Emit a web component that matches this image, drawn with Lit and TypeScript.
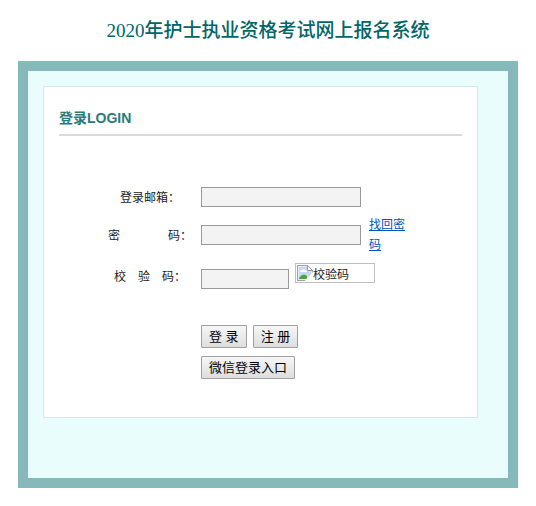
import { LitElement, html, css } from "lit";
import { customElement } from "lit/decorators.js";

@customElement("app-root")
export class AppRoot extends LitElement {
  static styles = css`
    :host {
      display: block;
      padding: 17px 18px 18px;
      background: #fff;
      color: #222;
      font: 12px/20px "Liberation Sans", "Noto Sans CJK SC", sans-serif;
    }
    .title {
      margin: 0 0 16px;
      text-align: center;
      color: #006666;
      font: 500 19px/28px "Liberation Serif", "Noto Sans CJK SC", serif;
    }
    .frame {
      border: 10px solid #86baba;
      background: #e9fdfd;
      padding: 15px 30px 60px 15px;
    }
    .card {
      border: 1px solid #d5e8e2;
      background: #fff;
      padding: 21px 15px 38px;
    }
    .heading {
      margin: 0;
      padding-bottom: 6px;
      border-bottom: 2px solid #dadada;
      color: #2a7a7b;
      font-size: 14px;
      line-height: 20px;
      font-weight: bold;
    }
    .form {
      display: flex;
      flex-direction: column;
      gap: 8px;
      padding: 51px 40px 0;
    }
    .row {
      display: grid;
      grid-template-columns: 102px 1fr;
      align-items: center;
    }
    .label {
      padding-top: 2px;
      line-height: 18px;
      text-align: center;
      white-space: pre;
    }
    .field {
      display: flex;
      align-items: center;
      gap: 8px;
    }
    .field.check {
      gap: 6px;
      align-items: flex-end;
      height: 26px;
    }
    .input {
      box-sizing: border-box;
      width: 160px;
      height: 20px;
      padding: 1px 2px;
      border: 1px solid #999;
      border-radius: 0;
      background: #f3f3f3;
      font: inherit;
    }
    .short {
      width: 88px;
    }
    .link {
      width: 40px;
      color: #0055bf;
      text-decoration: underline;
    }
    .captcha {
      box-sizing: border-box;
      display: flex;
      align-self: flex-start;
      align-items: flex-start;
      width: 80px;
      height: 20px;
      padding: 1px 1px 0;
      border: 1px solid #c0c0c0;
    }
    .broken {
      flex: none;
    }
    .actions {
      display: flex;
      flex-wrap: wrap;
      gap: 8px 6px;
      margin: 28px 0 0 102px;
      max-width: 160px;
    }
    .button {
      box-sizing: border-box;
      height: 23px;
      padding: 0 7px;
      border: 1px solid #a0a0a0;
      border-radius: 1px;
      background: linear-gradient(#f6f6f6, #dedede);
      color: #000;
      font: 13px/20px "Liberation Sans", "Noto Sans CJK SC", sans-serif;
      white-space: nowrap;
    }
  `;

  render() {
    return html`
      <h1 class="title">2020年护士执业资格考试网上报名系统</h1>
      <main class="frame">
        <section class="card">
          <h2 class="heading">登录LOGIN</h2>
          <form class="form" @submit=${(e: Event) => e.preventDefault()}>
            <div class="row">
              <label class="label" for="email">登录邮箱：</label>
              <div class="field"><input class="input" id="email" type="text" /></div>
            </div>
            <div class="row">
              <label class="label" for="password">密　　　　码：</label>
              <div class="field">
                <input class="input" id="password" type="password" />
                <a class="link" href="#">找回密码</a>
              </div>
            </div>
            <div class="row">
              <label class="label" for="code">校　验　码：</label>
              <div class="field check">
                <input class="input short" id="code" type="text" />
                <span class="captcha">
                  <svg class="broken" width="16" height="16" viewBox="0 0 16 16" aria-hidden="true">
                    <path d="M.5.5h10l5 5v10H.5z" fill="#c5d9f4" stroke="#a3a3a3" />
                    <path d="M1.500 1.500h9v4h4v9h-13z" fill="none" stroke="#e4edf9" />
                    <path d="M3 7q0-2 2-2 1-2 3 0 2 0 2 2z" fill="#fff" />
                    <path d="M2 14v-1q4-6 8-2v3z" fill="#4aa634" />
                    <path d="M10.500.5v5h5z" fill="#fff" stroke="#999" />
                    <path d="M16 7v9H8l2-3 3-2 1-2z" fill="#fff" />
                    <path d="M0 15.500h7" stroke="#a3a3a3" />
                  </svg>
                  <span>校验码</span>
                </span>
              </div>
            </div>
            <div class="actions">
              <button class="button" type="submit">登 录</button>
              <button class="button" type="button">注 册</button>
              <button class="button" type="button">微信登录入口</button>
            </div>
          </form>
        </section>
      </main>
    `;
  }
}
